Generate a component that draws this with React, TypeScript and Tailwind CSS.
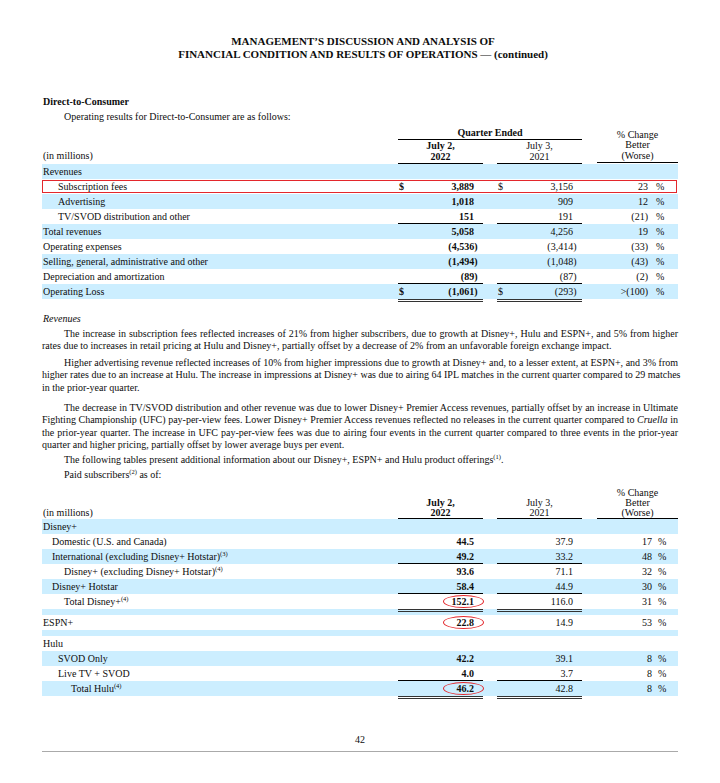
import React from "react";

type RowProps = {
  label: React.ReactNode;
  pl?: string;
  shaded?: boolean;
  a?: string;
  b?: string;
  pct?: string;
  dollar?: boolean;
  line?: boolean;
  ellipse?: boolean;
  box?: boolean;
  t2?: boolean;
};

function NumCell({
  v,
  dollar,
  bold,
  line,
  ellipse,
}: {
  v?: string;
  dollar?: boolean;
  bold?: boolean;
  line?: boolean;
  ellipse?: boolean;
}) {
  const neg = v ? v.endsWith(")") : false;
  return (
    <div
      className={`relative w-[85px] h-full flex items-center justify-between pl-[1px] ${
        neg ? "pr-[5.5px]" : "pr-[9px]"
      } ${bold ? "font-bold" : ""} ${line ? "border-b border-black" : ""}`}
    >
      <span>{dollar ? "$" : ""}</span>
      <span>{v}</span>
      {ellipse && (
        <span className="absolute left-[45px] top-[1px] w-[41px] h-[13px] rounded-[50%] border-[1.7px] border-[#e3272c]" />
      )}
    </div>
  );
}

function Row({ label, pl = "pl-[1px]", shaded, a, b, pct, dollar, line, ellipse, box, t2 }: RowProps) {
  return (
    <div className={`relative flex h-[15px] items-center ${shaded ? "bg-[#cceeff]" : ""}`}>
      <div className={`w-[356px] h-full flex items-center ${pl} whitespace-nowrap`}>{label}</div>
      <NumCell v={a} dollar={dollar} bold line={line} ellipse={ellipse} />
      <div className="w-[14px]" />
      <NumCell v={b} dollar={dollar} line={line} />
      <div className="w-[15px]" />
      <div className="w-[81px] h-full flex items-center">
        {pct !== undefined && (
          <>
            <span className={`${t2 ? "w-[55px]" : "w-[51px]"} text-right whitespace-nowrap`}>{pct}</span>
            <span className={t2 ? "ml-[6px]" : "ml-[8px]"}>%</span>
          </>
        )}
      </div>
      {box && (
        <span className="absolute left-0 right-[1px] top-[1px] bottom-[1px] border-[1.5px] border-[#e3272c]" />
      )}
    </div>
  );
}

function DoubleLine({ shaded, h = "h-[3px]" }: { shaded?: boolean; h?: string }) {
  return (
    <div className={`flex ${h} ${shaded ? "bg-[#cceeff]" : ""}`}>
      <div className="w-[356px]" />
      <div className="w-[85px] border-t-[3px] border-double border-[#333]" />
      <div className="w-[14px]" />
      <div className="w-[85px] border-t-[3px] border-double border-[#333]" />
    </div>
  );
}

function Sup({ children }: { children: React.ReactNode }) {
  return <sup className="text-[6.5px] top-[-4px]">{children}</sup>;
}

function Line({ children, last, first }: { children: React.ReactNode; last?: boolean; first?: boolean }) {
  return (
    <div
      className={`whitespace-nowrap ${first ? "pl-[22px]" : ""} ${
        last ? "" : "text-justify [text-align-last:justify] whitespace-normal"
      }`}
    >
      {children}
    </div>
  );
}

export default function App() {
  return (
    <div className="w-[720px] h-[783px] bg-white text-[#0d0d0d] font-['Liberation_Serif','Times_New_Roman',serif] text-[10px] overflow-hidden">
      <div className="px-[42px] pt-[35px]">
        <div className="text-center font-bold text-[11px] leading-[13px] pl-[6px]">
          <div>MANAGEMENT’S DISCUSSION AND ANALYSIS OF</div>
          <div>FINANCIAL CONDITION AND RESULTS OF OPERATIONS — (continued)</div>
        </div>

        <div className="mt-[34px] font-bold leading-[14px] pl-[1px]">Direct-to-Consumer</div>
        <div className="mt-[1px] leading-[14px] pl-[22px]">Operating results for Direct-to-Consumer are as follows:</div>

        {/* Table 1 header */}
        <div className="mt-[3px] flex h-[37px]">
          <div className="w-[356px] flex items-end pl-[1px] pb-[2px] leading-[12px]">(in millions)</div>
          <div className="w-[184px] flex flex-col pb-[1px]">
            <div className="h-[13px] border-b border-black text-center font-bold leading-[12px]">Quarter Ended</div>
            <div className="flex flex-1">
              <div className="w-[85px] border-b border-black text-center font-bold leading-[11px] flex flex-col justify-end pb-[1px]">
                <div>July 2,</div>
                <div>2022</div>
              </div>
              <div className="w-[14px]" />
              <div className="w-[85px] border-b border-black text-center leading-[11px] flex flex-col justify-end pb-[1px]">
                <div>July 3,</div>
                <div>2021</div>
              </div>
            </div>
          </div>
          <div className="w-[15px]" />
          <div className="w-[81px] mb-[1px] border-b border-black text-center leading-[10.5px] flex flex-col justify-end pb-[1px]">
            <div>% Change</div>
            <div>Better</div>
            <div>(Worse)</div>
          </div>
        </div>

        <Row label="Revenues" shaded />
        <Row label="Subscription fees" pl="pl-[16px]" a="3,889" b="3,156" pct="23" dollar box />
        <Row label="Advertising" pl="pl-[16px]" shaded a="1,018" b="909" pct="12" />
        <Row label="TV/SVOD distribution and other" pl="pl-[16px]" a="151" b="191" pct="(21)" line />
        <Row label="Total revenues" shaded a="5,058" b="4,256" pct="19" />
        <Row label="Operating expenses" a="(4,536)" b="(3,414)" pct="(33)" />
        <Row label="Selling, general, administrative and other" shaded a="(1,494)" b="(1,048)" pct="(43)" />
        <Row label="Depreciation and amortization" a="(89)" b="(87)" pct="(2)" line />
        <Row label="Operating Loss" shaded a="(1,061)" b="(293)" pct=">(100)" dollar />
        <DoubleLine />

        {/* Text */}
        <div className="mt-[10px] italic leading-[13px] pl-[1px]">Revenues</div>
        <div className="mt-[2.5px] leading-[12.3px]">
          <Line first>
            The increase in subscription fees reflected increases of 21% from higher subscribers, due to growth at Disney+, Hulu and ESPN+, and 5% from higher
          </Line>
          <Line last>
            rates due to increases in retail pricing at Hulu and Disney+, partially offset by a decrease of 2% from an unfavorable foreign exchange impact.
          </Line>
        </div>
        <div className="mt-[5px] leading-[12.3px]">
          <Line first>
            Higher advertising revenue reflected increases of 10% from higher impressions due to growth at Disney+ and, to a lesser extent, at ESPN+, and 3% from
          </Line>
          <Line>
            higher rates due to an increase at Hulu. The increase in impressions at Disney+ was due to airing 64 IPL matches in the current quarter compared to 29 matches
          </Line>
          <Line last>in the prior-year quarter.</Line>
        </div>
        <div className="mt-[8px] leading-[12.3px]">
          <Line first>
            The decrease in TV/SVOD distribution and other revenue was due to lower Disney+ Premier Access revenues, partially offset by an increase in Ultimate
          </Line>
          <Line>
            Fighting Championship (UFC) pay-per-view fees. Lower Disney+ Premier Access revenues reflected no releases in the current quarter compared to <i>Cruella</i> in
          </Line>
          <Line>
            the prior-year quarter. The increase in UFC pay-per-view fees was due to airing four events in the current quarter compared to three events in the prior-year
          </Line>
          <Line last>quarter and higher pricing, partially offset by lower average buys per event.</Line>
        </div>
        <div className="mt-[2.5px] leading-[12.3px] pl-[22px]">
          The following tables present additional information about our Disney+, ESPN+ and Hulu product offerings<Sup>(1)</Sup>.
        </div>
        <div className="mt-[3px] leading-[12.3px] pl-[22px]">
          Paid subscribers<Sup>(2)</Sup> as of:
        </div>

        {/* Table 2 header */}
        <div className="mt-[7px] flex h-[31px]">
          <div className="w-[356px] flex items-end pl-[1px] leading-[12px]">(in millions)</div>
          <div className="w-[85px] border-b border-black text-center font-bold leading-[10px] flex flex-col justify-end">
            <div>July 2,</div>
            <div>2022</div>
          </div>
          <div className="w-[14px]" />
          <div className="w-[85px] border-b border-black text-center leading-[10px] flex flex-col justify-end">
            <div>July 3,</div>
            <div>2021</div>
          </div>
          <div className="w-[15px]" />
          <div className="w-[81px] border-b border-black text-center leading-[10px] flex flex-col justify-end">
            <div>% Change</div>
            <div>Better</div>
            <div>(Worse)</div>
          </div>
        </div>

        <Row label="Disney+" shaded t2 />
        <Row label="Domestic (U.S. and Canada)" pl="pl-[10px]" a="44.5" b="37.9" pct="17" t2 />
        <Row
          label={
            <span>
              International (excluding Disney+ Hotstar)<Sup>(3)</Sup>
            </span>
          }
          pl="pl-[10px]"
          shaded
          a="49.2"
          b="33.2"
          pct="48"
          line
          t2
        />
        <Row
          label={
            <span>
              Disney+ (excluding Disney+ Hotstar)<Sup>(4)</Sup>
            </span>
          }
          pl="pl-[22px]"
          a="93.6"
          b="71.1"
          pct="32"
          t2
        />
        <Row label="Disney+ Hotstar" pl="pl-[10px]" shaded a="58.4" b="44.9" pct="30" line t2 />
        <Row
          label={
            <span>
              Total Disney+<Sup>(4)</Sup>
            </span>
          }
          pl="pl-[22px]"
          a="152.1"
          b="116.0"
          pct="31"
          ellipse
          t2
        />
        <DoubleLine shaded h="h-[6px]" />
        <Row label="ESPN+" a="22.8" b="14.9" pct="53" ellipse t2 />
        <div className="h-[6px] bg-[#cceeff]" />
        <Row label="Hulu" t2 />
        <Row label="SVOD Only" pl="pl-[16px]" shaded a="42.2" b="39.1" pct="8" t2 />
        <Row label="Live TV + SVOD" pl="pl-[16px]" a="4.0" b="3.7" pct="8" line t2 />
        <Row
          label={
            <span>
              Total Hulu<Sup>(4)</Sup>
            </span>
          }
          pl="pl-[29px]"
          shaded
          a="46.2"
          b="42.8"
          pct="8"
          ellipse
          t2
        />
        <DoubleLine />

        <div className="mt-[35px] text-center leading-[12px]">42</div>
        <div className="mt-[5px] border-t border-[#aaa]" />
      </div>
    </div>
  );
}
